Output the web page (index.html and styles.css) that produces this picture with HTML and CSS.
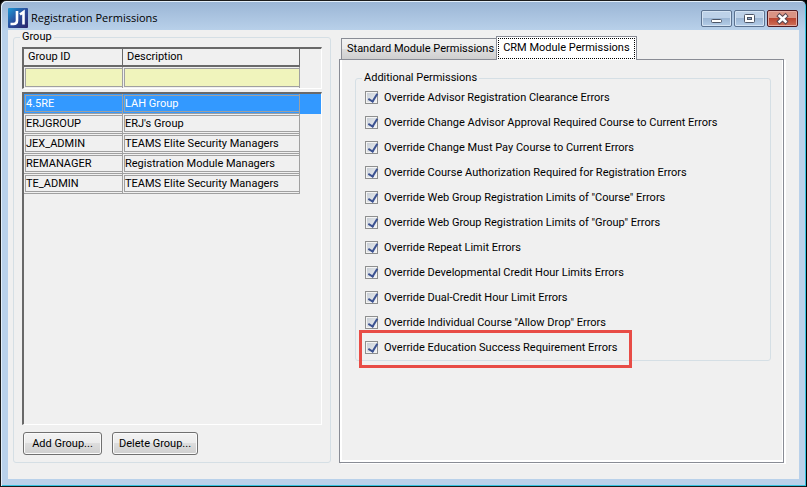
FILE: index.html
```html
<!DOCTYPE html>
<html lang="en">
  <head>
    <meta charset="utf-8" />
    <title>Registration Permissions</title>
    <link rel="stylesheet" href="styles.css">
  </head>
  <body>
    <div class="window">
      <header class="titlebar">
        <svg class="logo" viewBox="0 0 20 20" aria-hidden="true">
          <defs>
            <linearGradient id="logo-fill" x1="0" y1="0" x2="1" y2="1">
              <stop offset="0" stop-color="#1c9ad6" />
              <stop offset="0.5" stop-color="#2a4c9c" />
              <stop offset="1" stop-color="#2b2467" />
            </linearGradient>
          </defs>
          <rect width="20" height="20" rx="1" fill="url(#logo-fill)" />
          <path
            d="M9 3v9.500q0 3.500-3.500 3.500H2.500M12 6.500L15.500 4v12.500"
            fill="none"
            stroke="#fff"
            stroke-width="2.600"
          />
        </svg>
        <h1 class="title">Registration Permissions</h1>
        <div class="window-buttons">
          <button type="button" class="window-button" aria-label="Minimize">
            <svg viewBox="0 0 29 15">
              <rect x="9.500" y="8.500" width="10" height="3" rx="1" fill="#fff" stroke="#4c5566" />
            </svg>
          </button>
          <button type="button" class="window-button" aria-label="Maximize">
            <svg viewBox="0 0 29 15">
              <rect x="9.500" y="3.500" width="10" height="8" rx="1" fill="#fff" stroke="#4c5566" />
              <rect x="12.500" y="6.500" width="4" height="2" fill="#8fa9c9" stroke="#4c5566" />
            </svg>
          </button>
          <button type="button" class="window-button window-button-close" aria-label="Close">
            <svg viewBox="0 0 29 15">
              <path d="M11.500 5l6 5.500M17.500 5l-6 5.500" stroke="#5a4650" stroke-width="4.500" stroke-linecap="square" />
              <path d="M11.500 5l6 5.500M17.500 5l-6 5.500" stroke="#fff" stroke-width="2.500" stroke-linecap="square" />
            </svg>
          </button>
        </div>
      </header>

      <main class="client">
        <fieldset class="group-box groups">
          <legend>Group</legend>
          <div class="sunken">
            <table class="grid">
              <thead>
                <tr>
                  <th class="col-id">Group ID</th>
                  <th class="col-description">Description</th>
                  <td></td>
                </tr>
              </thead>
              <tbody>
                <tr>
                  <td class="filter"><input type="text" aria-label="Filter by group ID" /></td>
                  <td class="filter"><input type="text" aria-label="Filter by description" /></td>
                  <td></td>
                </tr>
              </tbody>
            </table>
          </div>
          <div class="sunken list">
            <table class="grid rows">
              <tr class="selected">
                <td class="col-id"><span class="cell">4.5RE</span></td>
                <td class="col-description"><span class="cell">LAH Group</span></td>
                <td></td>
              </tr>
              <tr>
                <td><span class="cell">ERJGROUP</span></td>
                <td><span class="cell">ERJ's Group</span></td>
                <td></td>
              </tr>
              <tr>
                <td><span class="cell">JEX_ADMIN</span></td>
                <td><span class="cell">TEAMS Elite Security Managers</span></td>
                <td></td>
              </tr>
              <tr>
                <td><span class="cell">REMANAGER</span></td>
                <td><span class="cell">Registration Module Managers</span></td>
                <td></td>
              </tr>
              <tr>
                <td><span class="cell">TE_ADMIN</span></td>
                <td><span class="cell">TEAMS Elite Security Managers</span></td>
                <td></td>
              </tr>
            </table>
          </div>
          <div class="actions">
            <button type="button" class="button">Add Group...</button>
            <button type="button" class="button">Delete Group...</button>
          </div>
        </fieldset>

        <section class="tabs">
          <div class="tab-list" role="tablist">
            <button type="button" class="tab" role="tab" aria-selected="false">Standard Module Permissions</button>
            <button type="button" class="tab tab-active" role="tab" aria-selected="true"><span>CRM Module Permissions</span></button>
          </div>
          <div class="tab-panel" role="tabpanel">
            <fieldset class="group-box permissions">
              <legend>Additional Permissions</legend>
              <label class="check"><input type="checkbox" checked />Override Advisor Registration Clearance Errors</label>
              <label class="check"><input type="checkbox" checked />Override Change Advisor Approval Required Course to Current Errors</label>
              <label class="check"><input type="checkbox" checked />Override Change Must Pay Course to Current Errors</label>
              <label class="check"><input type="checkbox" checked />Override Course Authorization Required for Registration Errors</label>
              <label class="check"><input type="checkbox" checked />Override Web Group Registration Limits of "Course" Errors</label>
              <label class="check"><input type="checkbox" checked />Override Web Group Registration Limits of "Group" Errors</label>
              <label class="check"><input type="checkbox" checked />Override Repeat Limit Errors</label>
              <label class="check"><input type="checkbox" checked />Override Developmental Credit Hour Limits Errors</label>
              <label class="check"><input type="checkbox" checked />Override Dual-Credit Hour Limit Errors</label>
              <label class="check"><input type="checkbox" checked />Override Individual Course "Allow Drop" Errors</label>
              <label class="check highlighted"><input type="checkbox" checked />Override Education Success Requirement Errors</label>
            </fieldset>
          </div>
        </section>
      </main>
    </div>
  </body>
</html>
```

FILE: styles.css
```css
:root {
  --face: #f0f0f0;
  --frame: #b9d1ea;
  --box-line: #d5dfe5;
  --grid-line: #a0a0a0;
  --dark-line: #696969;
  --tab-line: #898c95;
  --selection: #3399ff;
  --filter: #f0f4bc;
  --highlight: #e84c46;
}

* {
  box-sizing: border-box;
}

body {
  margin: 0;
  background-color: #000;
  font-family: Roboto, "Liberation Sans", Arial, sans-serif;
  font-size: 11px;
  line-height: 14px;
  color: #000;
}

button,
input {
  font: inherit;
  color: inherit;
}

.window {
  display: flex;
  flex-direction: column;
  min-height: 100vh;
  padding: 0 6px 6px;
  border: 1px solid #1b1b1b;
  border-right-color: #000;
  border-radius: 6px 6px 0 0;
  background: linear-gradient(#9ab5d5, var(--frame) 30px);
  box-shadow: inset 1px 1px #e3effa, inset -1px -1px #35c3e0;
}

.titlebar {
  display: flex;
  align-items: center;
  height: 29px;
  padding: 5px 2px 0 1px;
}

.logo {
  width: 20px;
  height: 20px;
}

.title {
  margin: 0 auto 0 3px;
  font-family: "Open Sans", "Noto Sans", sans-serif;
  font-size: 11px;
  line-height: 16px;
  font-weight: normal;
}

.window-buttons {
  display: flex;
  gap: 2px;
}

.window-button {
  width: 31px;
  height: 17px;
  padding: 0;
  border: 1px solid #5c7290;
  border-radius: 2px;
  background: linear-gradient(#bdd1e8 45%, #9cb6d4 50%, #b4cde8);
  box-shadow: inset 0 0 0 1px #d4e3f3;
}

.window-button svg {
  display: block;
  width: 100%;
  height: 100%;
}

.window-button-close {
  border-color: #4f1a22;
  background: linear-gradient(#d99384 45%, #bb4632 50%, #cf7058);
  box-shadow: inset 0 0 0 1px #e5aca2;
}

.client {
  display: flex;
  flex: 1;
  gap: 8px;
  margin: 0 1px 1px;
  padding: 0 15px 16px 5px;
  background-color: var(--face);
}

.group-box {
  min-width: 0;
  margin: 0;
  padding: 0 8px;
  border: 1px solid var(--box-line);
  border-radius: 3px;
}

.group-box legend {
  padding: 0 2px;
}

.groups {
  display: flex;
  flex-direction: column;
  width: 318px;
  padding-top: 3px;
}

.groups legend {
  margin-left: -2px;
}

.sunken {
  border: 1px solid #fff;
  border-top: 2px solid var(--dark-line);
  border-left: 2px solid var(--dark-line);
}

.list {
  height: 333px;
  margin-top: 3px;
}

.grid {
  width: 100%;
  table-layout: fixed;
  border-spacing: 0;
}

.grid th,
.grid td {
  padding: 0;
  text-align: left;
  font-weight: normal;
}

.grid .col-id {
  width: 99px;
}

.grid .col-description {
  width: 177px;
}

.grid th {
  height: 18px;
  padding-left: 4px;
  border-right: 1px solid var(--dark-line);
  border-bottom: 2px solid var(--dark-line);
  line-height: 16px;
}

.grid .filter {
  height: 21px;
  padding: 1px 0 1px 1px;
  border-right: 1px solid var(--grid-line);
}

.filter input {
  display: block;
  width: 100%;
  height: 19px;
  padding: 0 3px;
  border: 1px solid var(--grid-line);
  border-right: none;
  background-color: var(--filter);
}

.rows td {
  height: 20px;
  padding: 1px 0 1px 1px;
}

.rows td:not(:last-child) {
  border-right: 1px solid var(--grid-line);
  border-bottom: 1px solid var(--grid-line);
}

.cell {
  display: block;
  height: 17px;
  border: 1px solid var(--grid-line);
  border-right: none;
  line-height: 16px;
}

.selected {
  background-color: var(--selection);
  color: #fff;
}

.actions {
  display: flex;
  gap: 10px;
  padding: 7px 0 6px 1px;
}

.button {
  min-width: 79px;
  height: 23px;
  padding: 0 6px;
  border: 1px solid #707070;
  border-radius: 3px;
  background: linear-gradient(#f3f3f3, #ebebeb 50%, #dddddd 50%, #cfcfcf);
  box-shadow: inset 0 0 0 1px #fafafa;
}

.tabs {
  display: flex;
  flex: 1;
  flex-direction: column;
  padding-top: 6px;
}

.tab-list {
  display: flex;
  align-items: flex-end;
  padding-left: 2px;
}

.tab {
  height: 21px;
  padding: 0 2px 0 5px;
  border: 1px solid var(--tab-line);
  border-width: 1px 0 0 1px;
  background: linear-gradient(#f2f2f2, #ebebeb 50%, #dddddd 50%, #cfcfcf);
  white-space: nowrap;
}

.tab-active {
  z-index: 1;
  height: 24px;
  margin-bottom: -1px;
  padding: 0 1px;
  border-right-width: 1px;
  background: #fff;
}

.tab-active span {
  display: block;
  padding: 2px 4px 3px;
  border: 1px dotted #000;
}

.tab-panel {
  flex: 1;
  padding: 11px 12px 0 15px;
  border: 1px solid var(--tab-line);
  background-color: var(--face);
  box-shadow: inset 2px 0 #fff, inset -1px -2px #fff, 2px 1px #fff;
}

.permissions legend {
  margin-left: -2px;
}

.check {
  display: flex;
  align-items: center;
  width: fit-content;
  height: 25px;
  padding-left: 1px;
}

.check input {
  width: 13px;
  height: 13px;
  margin: 0 6px 0 0;
  appearance: none;
  border: 1px solid #8e8f8f;
  background: linear-gradient(135deg, #c3cad3, #f4f5f6);
  box-shadow: inset 0 0 0 1px #f4f4f4;
}

/* check mark */
.check input:checked::before {
  content: "";
  display: block;
  width: 4px;
  height: 8px;
  margin: 0 0 0 4px;
  border: solid #3c5291;
  border-width: 0 2px 2px 0;
  transform: rotate(32deg);
}

.highlighted {
  position: relative;
}

.highlighted::after {
  content: "";
  position: absolute;
  inset: -5px -15px -8px -5px;
  border: 3px solid var(--highlight);
}
```
